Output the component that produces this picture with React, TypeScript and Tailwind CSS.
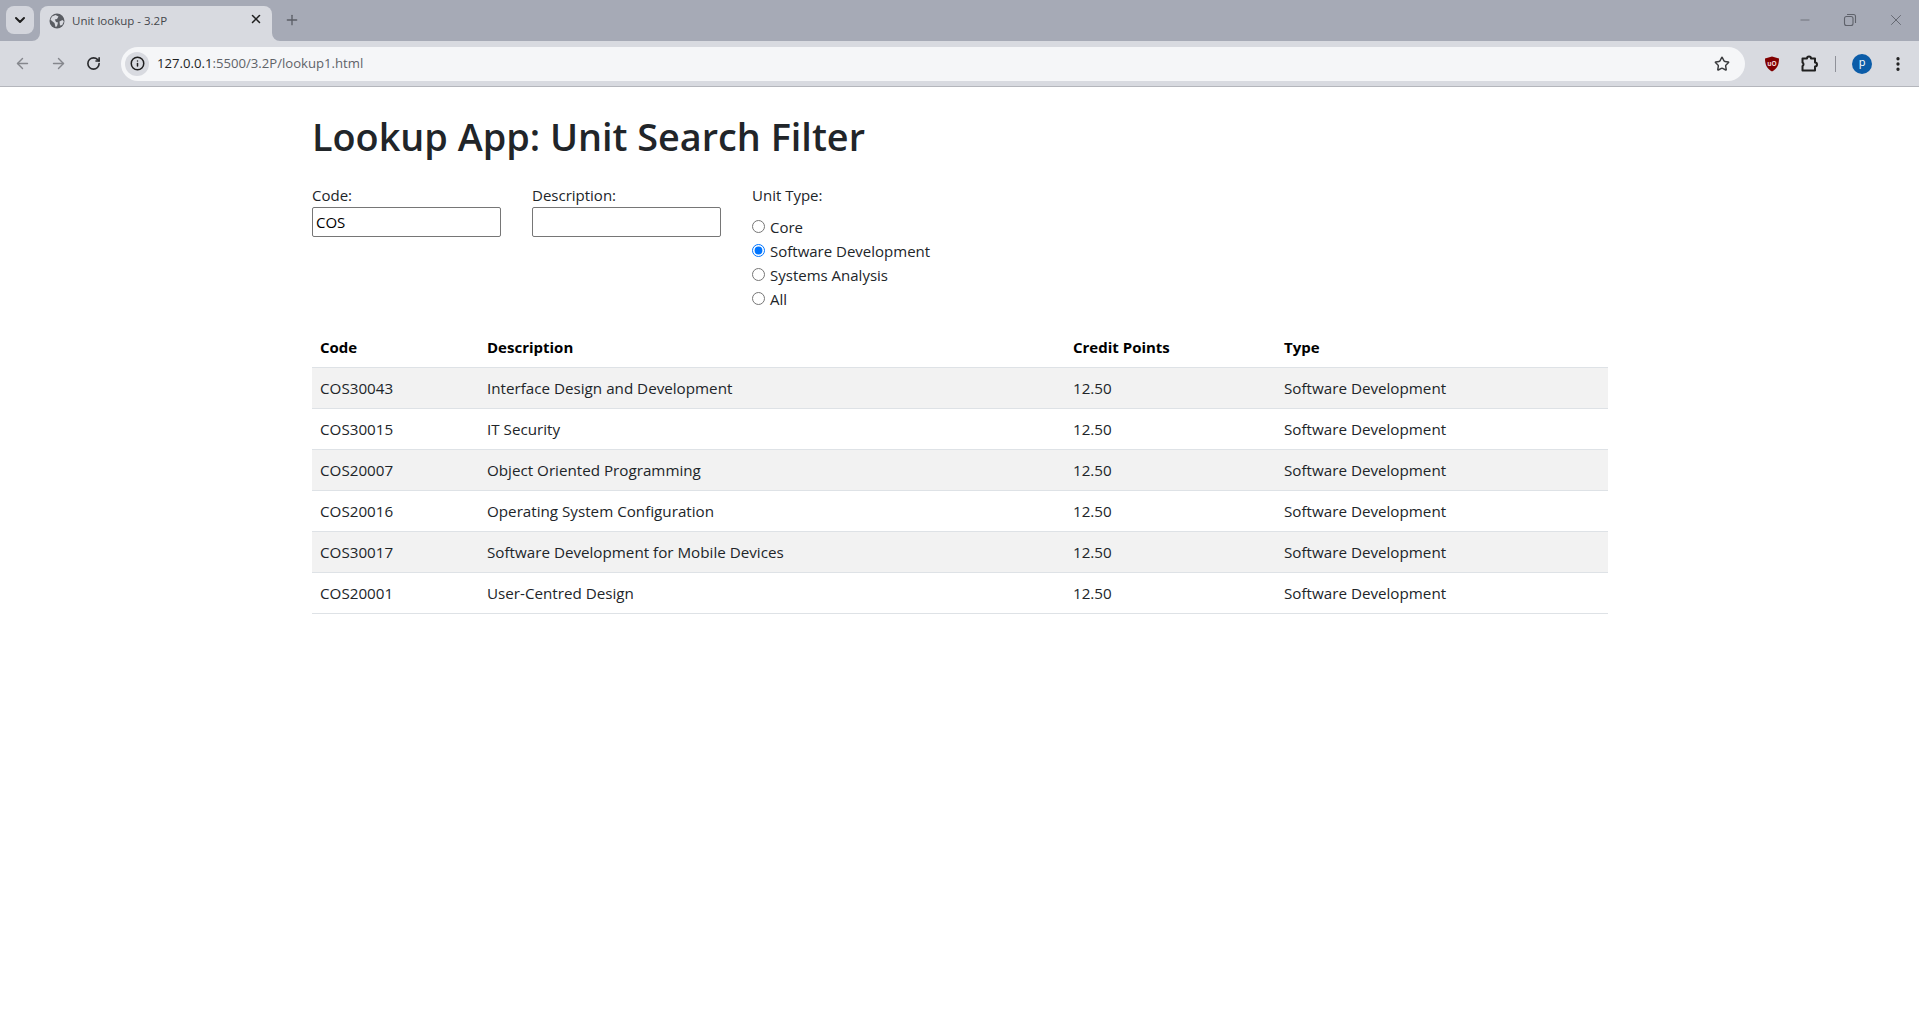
import { ArrowLeft, ArrowRight, ChevronDown, EllipsisVertical, Info, Minus, Plus, RotateCw, Star, X } from "lucide-react"

const units = [
  { code: "COS30043", description: "Interface Design and Development" },
  { code: "COS30015", description: "IT Security" },
  { code: "COS20007", description: "Object Oriented Programming" },
  { code: "COS20016", description: "Operating System Configuration" },
  { code: "COS30017", description: "Software Development for Mobile Devices" },
  { code: "COS20001", description: "User-Centred Design" },
]

const unitTypes = ["Core", "Software Development", "Systems Analysis", "All"]

function BrowserChrome() {
  return (
    <div className="h-[87px] border-b border-[#b4b6bc] bg-[#d8dae0] font-['Open_Sans',sans-serif]">
      {/* Tab strip */}
      <div className="flex h-[41px] items-end bg-[#a6aab6]">
        <div className="mb-[7px] ml-[6px] flex h-[28px] w-[28px] items-center justify-center rounded-lg bg-[#d3d5dc]">
          <ChevronDown className="h-4 w-4 text-[#1f1f1f]" strokeWidth={3} />
        </div>
        <div className="relative ml-[6px] flex h-[35px] w-[232px] items-center rounded-t-lg bg-[#d8dae0] pb-[6px] pl-[9px]">
          <svg className="absolute bottom-0 -left-2 h-2 w-2" viewBox="0 0 8 8">
            <path d="M8 0A8 8 0 0 1 0 8H8Z" fill="#d8dae0" />
          </svg>
          <svg className="absolute bottom-0 -right-2 h-2 w-2" viewBox="0 0 8 8">
            <path d="M0 0A8 8 0 0 0 8 8H0Z" fill="#d8dae0" />
          </svg>
          <svg className="h-[16px] w-[16px]" viewBox="0 0 16 16">
            <circle cx="8" cy="8" r="7.5" fill="#5a5d63" />
            <path d="M3 3.500 6.500 2l3 1.500L8 6 5.800 6.500 7 9l2 .6-1 3.600-1.500.8L5.500 10 3 8 1.500 6.500ZM10.500 8.500l3-1.500 1.300 1.500-1.600 3.600-2.200.4Z" fill="#d8dae0" />
          </svg>
          <span className="ml-[7px] text-[11.5px] text-[#45474c]">Unit lookup - 3.2P</span>
          <X className="absolute right-[9px] top-[6px] h-[14px] w-[14px] text-[#1f1f1f]" strokeWidth={2.6} />
        </div>
        <Plus className="mb-[13px] ml-[12px] h-[16px] w-[16px] text-[#5b5e66]" strokeWidth={2} />
        <div className="mb-[12px] ml-auto flex items-center gap-[30px] pr-[14px] text-[#5f626b]">
          <Minus className="h-[14px] w-[16px]" strokeWidth={1.3} />
          <svg className="h-[14px] w-[14px]" viewBox="0 0 14 14" fill="none" stroke="currentColor" strokeWidth="1.1">
            <rect x="1.500" y="3.500" width="8.500" height="9" rx="2" />
            <path d="M4 1.500h6.500a2 2 0 0 1 2 2V10" />
          </svg>
          <X className="h-[18px] w-[18px]" strokeWidth={1.2} />
        </div>
      </div>
      {/* Address bar */}
      <div className="flex h-[45px] items-center pl-[14px]">
        <ArrowLeft className="h-[17px] w-[17px] text-[#85878d]" strokeWidth={2} />
        <ArrowRight className="ml-[19px] h-[17px] w-[17px] text-[#85878d]" strokeWidth={2} />
        <RotateCw className="ml-[19px] h-[15px] w-[15px] text-[#2a2b2e]" strokeWidth={2.6} />
        <div className="ml-[20px] flex h-[34px] w-[1624px] items-center rounded-full bg-[#f5f6f8] pl-[4px]">
          <div className="flex h-[24px] w-[24px] items-center justify-center rounded-full bg-[#d8dae0]">
            <Info className="h-[15px] w-[15px] text-[#1f1f1f]" strokeWidth={2.4} />
          </div>
          <span className="ml-[8px] text-[13.15px] text-[#5f6368]">
            <span className="text-[#1f1f1f]">127.0.0.1</span>:5500/3.2P/lookup1.html
          </span>
          <Star className="ml-auto mr-[15px] h-[16px] w-[16px] text-[#3c3d40]" strokeWidth={2.2} />
        </div>
        <svg className="ml-[19px] h-[16px] w-[16px]" viewBox="0 0 16 16">
          <path d="M8 .5 15 2.600c0 6.600-2.200 10.600-7 12.900C3.200 13.200 1 9.200 1 2.600Z" fill="#800000" />
          <text x="8" y="10" textAnchor="middle" fontSize="6.500" fontWeight="700" fill="#f3d6d6">uO</text>
        </svg>
        <svg className="ml-[21px] h-[17px] w-[17px]" viewBox="0 0 17 17" fill="none" stroke="#1f1f1f" strokeWidth="2" strokeLinejoin="round">
          <path d="M1.500 3.500H6a2 2 0 0 1 4 0h4v4a2 2 0 0 1 0 4v4H1.500v-4.500a2 2 0 0 0 0-3.500Z" />
        </svg>
        <div className="ml-[17px] h-[16px] w-[1px] bg-[#8f9199]" />
        <div className="ml-[16px] flex h-[20px] w-[20px] items-center justify-center rounded-full bg-[#0b5ca8] pb-[2px] text-[11px] text-white">p</div>
        <EllipsisVertical className="ml-[17px] h-[18px] w-[18px] text-[#1f1f1f]" strokeWidth={2.4} />
      </div>
    </div>
  )
}

export default function App() {
  return (
    <div className="min-h-[1028px] bg-white">
      <BrowserChrome />
      <main className="mx-[312px] w-[1296px] pt-[26px] font-['Open_Sans',sans-serif] text-[15px] text-[#212529]">
        <h1 className="mb-[22px] text-[37.8px] leading-[48px] font-semibold">Lookup App: Unit Search Filter</h1>

        <form className="mb-[15px] flex gap-[31px]">
          <div className="flex w-[189px] flex-col">
            <label className="leading-6">Code:</label>
            <input
              defaultValue="COS"
              className="h-[30px] rounded-[2px] border border-[#767676] px-[3px] text-[15px] text-black"
            />
          </div>
          <div className="flex w-[189px] flex-col">
            <label className="leading-6">Description:</label>
            <input className="h-[30px] rounded-[2px] border border-[#767676] px-[3px]" />
          </div>
          <fieldset>
            <legend className="mb-2 leading-6">Unit Type:</legend>
            {unitTypes.map((type) => (
              <label key={type} className="flex h-6 items-center">
                <input
                  type="radio"
                  name="unitType"
                  defaultChecked={type === "Software Development"}
                  className="mr-[5px] mb-[2px] h-[13px] w-[13px]"
                />
                {type}
              </label>
            ))}
          </fieldset>
        </form>

        <table className="w-full table-fixed border-collapse text-left text-[15.2px]">
          <thead>
            <tr className="h-[41px] border-b border-[#dee2e6] text-black">
              <th className="w-[167px] px-2 pt-[2px] text-[15px] font-bold">Code</th>
              <th className="w-[586px] px-2 pt-[2px] text-[15px] font-bold">Description</th>
              <th className="w-[211px] px-2 pt-[2px] text-[15px] font-bold">Credit Points</th>
              <th className="px-2 pt-[2px] text-[15px] font-bold">Type</th>
            </tr>
          </thead>
          <tbody>
            {units.map((unit, index) => (
              <tr key={unit.code} className={`h-[41px] border-b border-[#dee2e6] ${index % 2 === 0 ? "bg-[#f2f2f2]" : "bg-white"}`}>
                <td className="px-2 pt-[2px]">{unit.code}</td>
                <td className="px-2 pt-[2px]">{unit.description}</td>
                <td className="px-2 pt-[2px]">12.50</td>
                <td className="px-2 pt-[2px]">Software Development</td>
              </tr>
            ))}
          </tbody>
        </table>
      </main>
    </div>
  )
}
